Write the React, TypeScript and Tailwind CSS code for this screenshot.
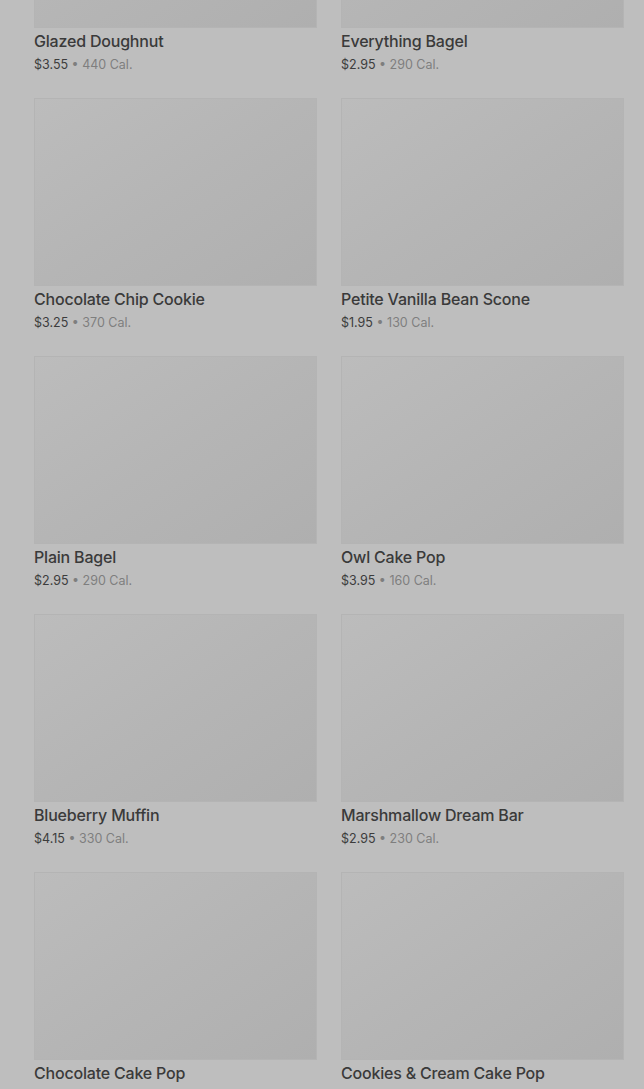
import React from "react";

const items = [
  { name: "Glazed Doughnut", price: "$3.55", cal: "440 Cal." },
  { name: "Everything Bagel", price: "$2.95", cal: "290 Cal." },
  { name: "Chocolate Chip Cookie", price: "$3.25", cal: "370 Cal." },
  { name: "Petite Vanilla Bean Scone", price: "$1.95", cal: "130 Cal." },
  { name: "Plain Bagel", price: "$2.95", cal: "290 Cal." },
  { name: "Owl Cake Pop", price: "$3.95", cal: "160 Cal." },
  { name: "Blueberry Muffin", price: "$4.15", cal: "330 Cal." },
  { name: "Marshmallow Dream Bar", price: "$2.95", cal: "230 Cal." },
  { name: "Chocolate Cake Pop", price: "$3.95", cal: "160 Cal." },
  { name: "Cookies & Cream Cake Pop", price: "$3.95", cal: "160 Cal." },
];

export default function App() {
  return (
    <div
      className="w-[644px] h-[1089px] overflow-hidden bg-[#bebebe]"
      style={{ fontFamily: "Inter, 'Noto Sans', sans-serif" }}
    >
      <div className="mt-[-160px] pl-[34px] pr-[20px] grid grid-cols-2 gap-x-[24px] gap-y-[24px]">
        {items.map((it) => (
          <div key={it.name} className="flex flex-col">
            <div className="h-[188px] bg-gradient-to-br from-[#bcbcbc] via-[#b5b5b5] to-[#afafaf] border border-[#b4b4b4]" />
            <div className="mt-[2px] text-[16px] leading-[22px] font-medium text-[#3a3a3a] tracking-[-0.2px]">
              {it.name}
            </div>
            <div className="mt-[4px] text-[12.5px] leading-[18px] text-[#3c3c3c]">
              {it.price}
              <span className="text-[#7e7e7e]"> • {it.cal}</span>
            </div>
          </div>
        ))}
      </div>
    </div>
  );
}
